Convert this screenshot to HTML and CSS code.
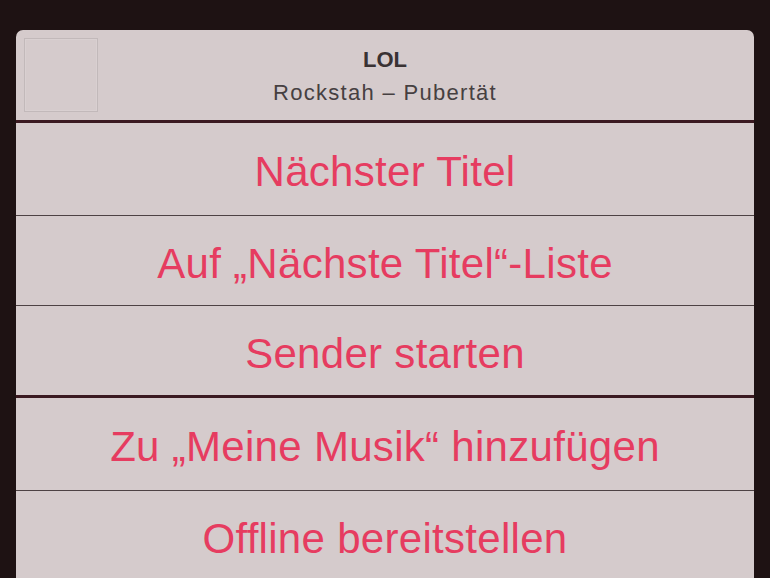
FILE: index.html
```html
<!DOCTYPE html>
<html lang="de">
<head>
<meta charset="utf-8">
<title>Aktionen</title>
<link rel="stylesheet" href="styles.css">
</head>
<body>
<div class="sheet">
  <div class="header">
    <div class="art"></div>
    <div class="info">
      <div class="title">LOL</div>
      <div class="subtitle">Rockstah – Pubertät</div>
    </div>
  </div>
  <div class="group">
    <div class="row r1">Nächster Titel</div>
    <div class="row r2">Auf „Nächste Titel“-Liste</div>
    <div class="row r3">Sender starten</div>
  </div>
  <div class="group">
    <div class="row r4">Zu „Meine Musik“ hinzufügen</div>
    <div class="row r5">Offline bereitstellen</div>
  </div>
</div>
</body>
</html>
```
FILE: styles.css
```css
html, body {
  margin: 0;
  padding: 0;
  background: #1e1213;
  height: 578px;
  overflow: hidden;
  font-family: "Liberation Sans", Arial, sans-serif;
}
.sheet {
  margin: 30px 16px 0 16px;
  background: #d5cbcc;
  border-radius: 7px 7px 0 0;
  height: 548px;
  overflow: hidden;
}
.header {
  position: relative;
  height: 75px;
  padding-top: 15px;
  border-bottom: 3px solid #3b1a21;
}
.art {
  position: absolute;
  left: 8px;
  top: 8px;
  width: 72px;
  height: 72px;
  border: 1px solid #c2b9ba;
  box-shadow: inset 0 0 0 1px #d9d0d1;
}
.info {
  text-align: center;
}
.title {
  font-weight: bold;
  font-size: 22px;
  color: #393233;
  line-height: 30px;
}
.subtitle {
  font-size: 22px;
  color: #464041;
  line-height: 36px;
  letter-spacing: 1.3px;
}
.group {
  border-bottom: 3px solid #3b1a21;
}
.row {
  display: flex;
  align-items: center;
  justify-content: center;
  box-sizing: border-box;
  padding-top: 6px;
  font-size: 42px;
  letter-spacing: 0.3px;
  color: #e63c60;
  border-bottom: 1px solid #4d4244;
}
.row:last-child {
  border-bottom: none;
}
.r1 { height: 93px; }
.r2 { height: 90px; }
.r3 { height: 89px; }
.r4 { height: 93px; }
.r5 { height: 90px; }
```
